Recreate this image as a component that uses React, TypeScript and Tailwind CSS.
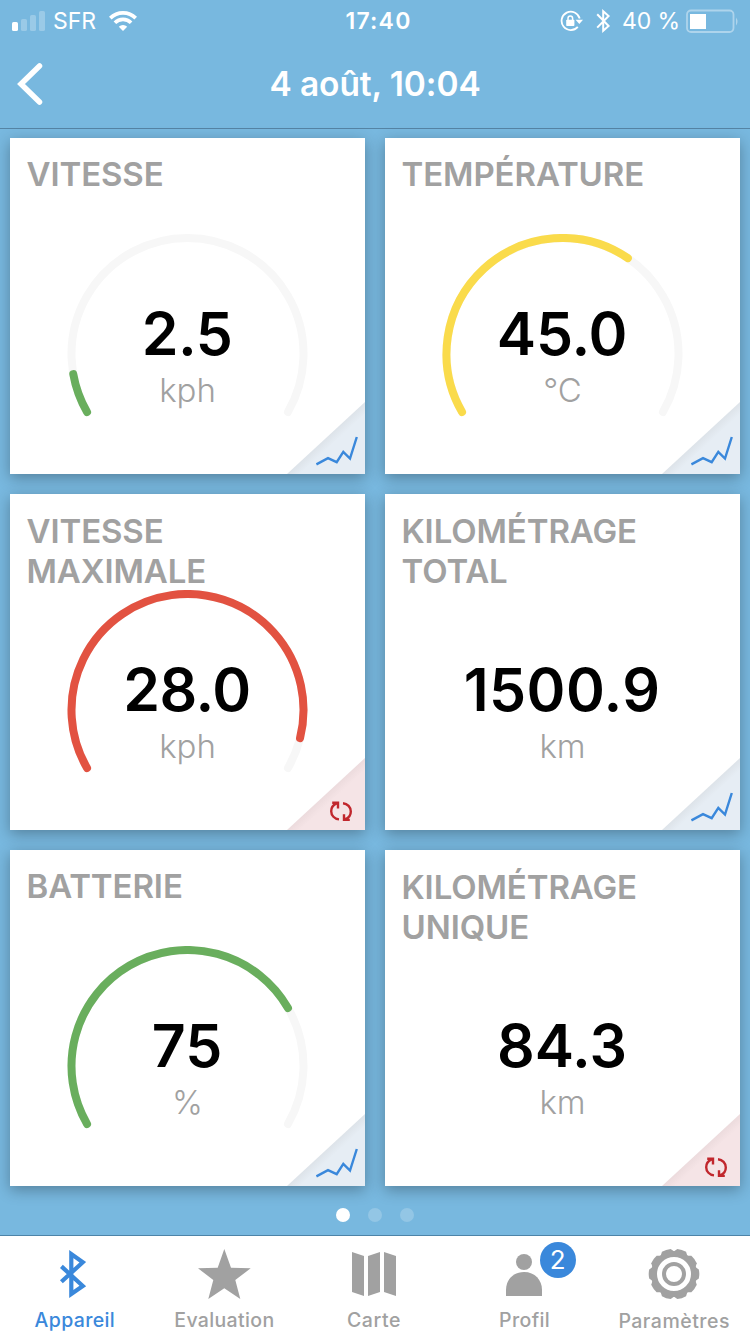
import type { ReactNode } from 'react';
import { clsx } from 'clsx';

type Metric = {
  title: string[];
  value: string;
  unit: string;
  action: 'chart' | 'reset';
  ratio?: number;
  color?: string;
  valueClass: string;
};

const metrics: Metric[] = [
  { title: ['VITESSE'], value: '2.5', unit: 'kph', action: 'chart', ratio: 2.5 / 30, color: '#69ae5d', valueClass: 'tracking-[-0.6px]' },
  { title: ['TEMPÉRATURE'], value: '45.0', unit: '°C', action: 'chart', ratio: 45 / 70, color: '#fadb4b', valueClass: 'tracking-[-0.2px]' },
  { title: ['VITESSE', 'MAXIMALE'], value: '28.0', unit: 'kph', action: 'reset', ratio: 28 / 30, color: '#e25241', valueClass: 'tracking-[-0.5px]' },
  { title: ['KILOMÉTRAGE', 'TOTAL'], value: '1500.9', unit: 'km', action: 'chart', valueClass: 'tracking-[0.4px]' },
  { title: ['BATTERIE'], value: '75', unit: '%', action: 'chart', ratio: 0.75, color: '#69ae5d', valueClass: 'tracking-normal' },
  { title: ['KILOMÉTRAGE', 'UNIQUE'], value: '84.3', unit: 'km', action: 'reset', valueClass: 'tracking-normal' },
];

// Arc opens at the bottom: 240 degrees, starting lower left
const arcPath = (ratio: number) => {
  const r = 116;
  const point = (deg: number) => {
    const a = (deg * Math.PI) / 180;
    return `${120 + r * Math.cos(a)} ${120 + r * Math.sin(a)}`;
  };
  const sweep = 240 * ratio;
  return `M ${point(150)} A ${r} ${r} 0 ${sweep > 180 ? 1 : 0} 1 ${point(150 + sweep)}`;
};

const Gauge = ({ ratio, color }: { ratio: number; color: string }) => (
  <svg className="[grid-area:1/1] justify-self-center mt-24" width="241" height="184" viewBox="-0.5 0 241 184" fill="none" strokeWidth="8" strokeLinecap="round">
    <path d={arcPath(1)} stroke="#f7f7f7" />
    <path d={arcPath(ratio)} stroke={color} />
  </svg>
);

const Corner = ({ action }: { action: 'chart' | 'reset' }) => (
  <button className="[grid-area:1/1] self-end justify-self-end" aria-label={action}>
    <svg className="block" width="78" height="72" viewBox="-1 0 78 72" fill="none">
      <defs>
        <linearGradient id={`fold-${action}`} gradientUnits="userSpaceOnUse" x1="38" y1="36" x2="44" y2="42.5">
          <stop offset="0" stopColor={action === 'chart' ? '#dde3e9' : '#ecdbdd'} />
          <stop offset="1" stopColor={action === 'chart' ? '#e6edf4' : '#f5e4e6'} />
        </linearGradient>
      </defs>
      <path d="M-1 72L77 0V72Z" fill={`url(#fold-${action})`} />
      {action === 'chart' ? (
        <path d="M28.4 62.4L40 56.2L48.7 60.2L55.3 49.8L62 56.6L68.8 35" stroke="#3a88db" strokeWidth="2.4" />
      ) : (
        <g stroke="#c1272d" strokeWidth="2.4">
          <path d="M51 61.4C46.5 61 43.2 57.5 43.2 53.2C43.2 49.7 45 47 48.6 45.4M44.2 44.7H50V50.4" />
          <path d="M55 45.2C59.5 45.6 62.8 49.1 62.8 53.4C62.8 56.9 61 59.6 57.4 61.2M61.8 61.9H56V56.2" />
        </g>
      )}
    </svg>
  </button>
);

const MetricCard = ({ metric }: { metric: Metric }) => (
  <section className="grid h-[336px] bg-white shadow-[0_4px_14px_rgba(0,0,0,0.3)]">
    <h2
      className={clsx(
        '[grid-area:1/1] pl-[16.5px] text-[33px] leading-10 font-semibold tracking-[-0.1px] text-[#a1a1a1]',
        metric.title.length > 1 ? 'pt-[17px]' : 'pt-4',
      )}
    >
      {metric.title.map((line) => (
        <span key={line} className="block">{line}</span>
      ))}
    </h2>
    {metric.ratio !== undefined && <Gauge ratio={metric.ratio} color={metric.color!} />}
    <div className="[grid-area:1/1] pt-[160px] text-center">
      <div className={clsx('pr-px text-[59px] leading-[72px] font-semibold text-black', metric.valueClass)}>{metric.value}</div>
      <div className="text-[33px] leading-10 font-light text-[#a1a1a1]">{metric.unit}</div>
    </div>
    <Corner action={metric.action} />
  </section>
);

const StatusBar = () => (
  <div className="grid h-10 grid-cols-3 items-center text-[23px] leading-10">
    <div className="flex items-center pl-3">
      <svg width="34" height="20" viewBox="0 0 34 20" fill="white">
        <rect x="0" y="11" width="6" height="9" rx="1.6" />
        <g opacity="0.25">
          <rect x="9" y="8" width="6" height="12" rx="1.6" />
          <rect x="18" y="4" width="6" height="16" rx="1.6" />
          <rect x="27" y="0" width="6" height="20" rx="1.6" />
        </g>
      </svg>
      <span className="ml-[7px] pt-px">SFR</span>
      <svg className="ml-[13px]" width="28" height="20" viewBox="0 0 28 20" fill="none" stroke="white" strokeWidth="3.7">
        <path d="M1.3 7.1A18 18 0 0 1 26.7 7.1" />
        <path d="M5.9 11.7A11.5 11.5 0 0 1 22.1 11.7" />
        <path d="M14 20L9.8 15.8A6 6 0 0 1 18.2 15.8Z" fill="white" stroke="none" />
      </svg>
    </div>
    <div className="pt-px pl-[7px] text-center font-semibold tracking-[1.2px]">17:40</div>
    <div className="flex items-center justify-end pr-[11px]">
      <svg width="23" height="22" viewBox="0 0 23 22" fill="none" stroke="white" strokeWidth="1.8">
        <path d="M19.7 8.5A9.2 9.2 0 1 0 17.8 16.8" />
        <path d="M15.6 9.7H23L19.3 14Z" fill="white" stroke="none" />
        <rect x="6.2" y="9.8" width="8.2" height="6.2" rx="0.8" fill="white" stroke="none" />
        <path d="M8 10.5V8.2A2.3 2.3 0 0 1 12.6 8.2V10.5" strokeWidth="1.5" />
      </svg>
      <svg className="ml-[13px]" width="15" height="24" viewBox="0 0 15 24" fill="none" stroke="white" strokeWidth="2">
        <path d="M1.2 5.2L12.6 17L7.2 21.8V2.2L12.6 7L1.2 18.6" />
      </svg>
      <span className="ml-[11px] pt-px tracking-[-0.1px]">40 %</span>
      <svg className="ml-1.5" width="53" height="24" viewBox="0 0 53 24" fill="none">
        <rect x="1" y="1.5" width="46.5" height="21.5" rx="4" stroke="white" strokeOpacity="0.4" strokeWidth="1.8" />
        <rect x="4" y="5" width="16" height="15" fill="white" />
        <path d="M50 8.5Q53 12.5 50 16.5Z" fill="white" fillOpacity="0.4" />
      </svg>
    </div>
  </div>
);

const BluetoothIcon = () => (
  <svg className="mr-1" width="28" height="50" viewBox="0 0 28 50" fill="none" stroke="#3a88db" strokeWidth="4.2">
    <path d="M2.4 17.4L23.8 37L12.3 45V5L23.8 13.2L2.4 32.8" />
  </svg>
);

const StarIcon = () => (
  <svg width="53" height="50" viewBox="0 0 53 50" fill="#a1a1a1">
    <path d="M26.3 0L33 18.7L52.7 19.3L37.3 31L42.3 50L26.3 39.3L10.3 50L15.3 31L0 19.3L19.7 18.7Z" />
  </svg>
);

const MapIcon = () => (
  <svg width="44" height="50" viewBox="0 0 44 50" fill="#a1a1a1">
    <path d="M0 3L12 7V47L0 43ZM16 7L28 3V43L16 47ZM32 3L44 7V47L32 43Z" />
  </svg>
);

const ProfileIcon = () => (
  <svg width="36" height="50" viewBox="0 0 36 50" fill="#a1a1a1">
    <circle cx="18" cy="13" r="8" />
    <path d="M0 47V41C0 31 7 23 18 23S36 31 36 41V47Z" />
  </svg>
);

const GearIcon = () => (
  <svg className="ml-px" width="52" height="52" viewBox="-26 -26 52 52" fill="#a1a1a1">
    {Array.from({ length: 10 }, (_, i) => (
      <path key={i} d="M20 -7.2L22 -6.6L24.8 -4.6Q25.8 0 24.8 4.6L22 6.6L20 7.2Z" transform={`rotate(${i * 36})`} />
    ))}
    <circle r="20" fill="none" stroke="#a1a1a1" strokeWidth="6" />
    <circle r="10" fill="none" stroke="#a1a1a1" strokeWidth="4" />
  </svg>
);

const Tab = ({ label, active, badge, className, children }: { label: string; active?: boolean; badge?: number; className: string; children: ReactNode }) => (
  <button className={clsx('relative flex flex-1 flex-col items-center pt-3', active ? 'text-[#3a88db]' : 'text-[#a1a1a1]')}>
    <span className="flex h-[52px] items-center">{children}</span>
    <span className={clsx('mt-[7px] text-[19.5px] leading-7 font-medium', className)}>{label}</span>
    {badge && (
      <span className="absolute top-1.5 left-[91px] size-9 rounded-full bg-[#3a88db] text-center text-[26px] leading-9 text-white">{badge}</span>
    )}
  </button>
);

const App = () => (
  <div className="flex h-[1334px] w-[750px] flex-col overflow-hidden bg-[#78b8df] font-[Inter,'Liberation_Sans',sans-serif]">
    <header className="h-[129px] border-b border-[#5584a5] text-white">
      <StatusBar />
      <div className="grid h-[88px] grid-cols-[1fr_auto_1fr] items-center">
        <button className="pl-4" aria-label="Retour">
          <svg width="28" height="44" viewBox="0 0 28 44" fill="none" stroke="white" strokeWidth="5.5" strokeLinecap="round">
            <path d="M23.5 4L5 22L23.5 40" />
          </svg>
        </button>
        <h1 className="text-[33.5px] leading-10 font-semibold tracking-[-0.1px]">4 août, 10:04</h1>
      </div>
    </header>

    <main className="grid grid-cols-2 gap-5 px-2.5 pt-[9px]">
      {metrics.map((metric) => (
        <MetricCard key={metric.title.join(' ')} metric={metric} />
      ))}
    </main>

    {/* Page indicator */}
    <div className="flex flex-1 items-center justify-center gap-[18px] pt-2">
      <span className="size-3.5 rounded-full bg-white" />
      <span className="size-3.5 rounded-full bg-white/20" />
      <span className="size-3.5 rounded-full bg-white/20" />
    </div>

    <nav className="flex h-[99px] border-t border-[#4d84a8] bg-white pr-0.5">
      <Tab label="Appareil" active className="tracking-[0.35px]"><BluetoothIcon /></Tab>
      <Tab label="Evaluation" className="tracking-[0.35px]"><StarIcon /></Tab>
      <Tab label="Carte" className="tracking-[0.6px]"><MapIcon /></Tab>
      <Tab label="Profil" badge={2} className="pl-0.5 tracking-[0.4px]"><ProfileIcon /></Tab>
      <Tab label="Paramètres" className="pl-0.5 tracking-[0.5px]"><GearIcon /></Tab>
    </nav>
  </div>
);

export default App;
